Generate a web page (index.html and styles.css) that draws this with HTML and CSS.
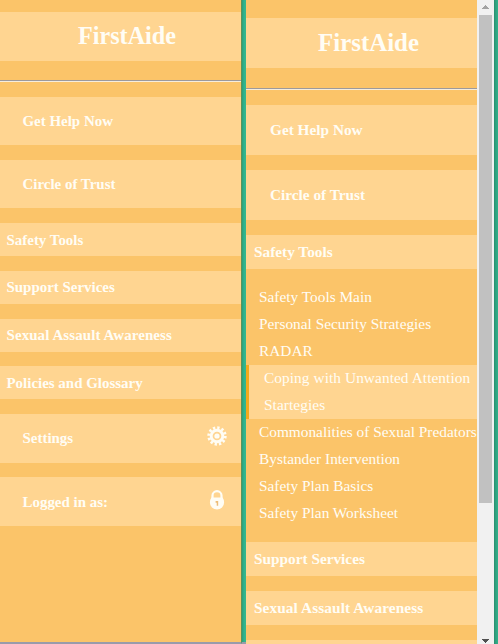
FILE: index.html
```html
<!DOCTYPE html>
<html lang="en">
<head>
<meta charset="utf-8">
<title>FirstAide</title>
<link rel="stylesheet" href="styles.css">
</head>
<body>
<div class="screens">
  <nav class="menu compact">
    <h1 class="brand">FirstAide</h1>
    <hr class="rule">
    <div class="item">Get Help Now</div>
    <div class="item">Circle of Trust</div>
    <div class="group">Safety Tools</div>
    <div class="group">Support Services</div>
    <div class="group wide">Sexual Assault Awareness</div>
    <div class="group">Policies and Glossary</div>
    <div class="item">Settings
      <svg class="icon" viewBox="0 0 20 20">
        <g fill="none" stroke="#fffdf5">
          <circle cx="10" cy="10" r="5.8" stroke-width="2.9"/>
          <circle cx="10" cy="10" r="8.2" stroke-width="3" stroke-dasharray="2.3 1.993"/>
        </g>
        <circle cx="10" cy="10" r="2.6" fill="#fffdf5"/>
      </svg>
    </div>
    <div class="item">Logged in as:
      <svg class="icon" viewBox="0 0 20 20">
        <path d="M5.5 10V5.5a4.5 4.3 0 0 1 9 0V10" fill="none" stroke="#fffdf5" stroke-width="2.2"/>
        <path d="M4.4 7.6h11.2q1.5 2.2 1.5 4.8a7.1 7.1 0 0 1-14.2 0q0-2.6 1.5-4.8z" fill="#fffdf5"/>
        <path d="M8.6 11h2.6v4.8H9.7v-3H8.6z" fill="#edbd78"/>
      </svg>
    </div>
  </nav>
  <div class="divider"></div>
  <nav class="menu expanded">
    <h1 class="brand">FirstAide</h1>
    <hr class="rule">
    <div class="item">Get Help Now</div>
    <div class="item">Circle of Trust</div>
    <div class="group">Safety Tools</div>
    <ul class="links">
      <li>Safety Tools Main</li>
      <li>Personal Security Strategies</li>
      <li>RADAR</li>
      <li class="active">Coping with Unwanted Attention<br>Startegies</li>
      <li>Commonalities of Sexual Predators</li>
      <li>Bystander Intervention</li>
      <li>Safety Plan Basics</li>
      <li>Safety Plan Worksheet</li>
    </ul>
    <div class="group">Support Services</div>
    <div class="group wide">Sexual Assault Awareness</div>
    <div class="group"></div>
  </nav>
  <div class="scrollbar">
    <svg class="arrow" viewBox="0 0 17 15"><path d="M5 9h7v-1h-1v-1h-1v-1h-1v-1h-1v1h-1v1h-1v1h-1z" fill="#a3a3a3"/></svg>
    <div class="thumb"></div>
    <svg class="arrow bottom" viewBox="0 0 17 15"><path d="M5 8h7v1h-1v1h-1v1h-1v1h-1v-1h-1v-1h-1v-1h-1z" fill="#505050"/></svg>
  </div>
  <div class="edge"></div>
</div>
</body>
</html>
```
FILE: styles.css
```css
* { box-sizing: border-box; }
body {
  margin: 0;
  overflow: hidden;
  background: #fbc469;
  color: #fffdf5;
  font-family: "Liberation Serif", "Times New Roman", serif;
}
.screens { display: flex; height: 644px; }
.menu { overflow: hidden; background: #fbc469; font-weight: bold; }
.brand, .item, .group { display: flex; align-items: center; background: #ffd591; white-space: nowrap; }
.brand { margin: 0; justify-content: center; }
.rule { height: 2px; margin: 0; border: 0; border-top: 1px solid #9d9a9c; background: #f7eddc; }
.item { justify-content: space-between; }

.compact { width: 241px; padding-top: 12px; border-bottom: 2px solid #999baa; font-size: 14.95px; }
.compact .brand { height: 48.5px; margin-bottom: 19.5px; padding-left: 13px; font-size: 24.2px; }
.compact .rule { margin-bottom: 14.5px; }
.compact .item { height: 48.6px; margin-bottom: 14.8px; padding: 1px 14px 0 22.5px; }
.compact .group { height: 33px; margin-bottom: 14.7px; padding: 1px 0 0 6.5px; }
.menu .wide { letter-spacing: 0.1px; }
.icon { flex: none; width: 20px; height: 20px; margin-top: -5px; }

.divider { width: 5px; border-left: 1px solid #56945e; background: linear-gradient(90deg, #319c76, #2db58e 50%, #38b58c); border-bottom: 2px solid #999baa; }

.expanded { width: 231px; padding-top: 18px; font-size: 15.3px; }
.expanded .brand { height: 50px; margin-bottom: 20px; padding-left: 14px; font-size: 24.9px; }
.expanded .rule { margin-bottom: 15px; }
.expanded .item { height: 50px; margin-bottom: 15px; padding-left: 24px; }
.expanded .group { height: 34px; margin-bottom: 15px; padding-left: 8px; }
.links { margin: 0 0 15px; padding: 0; list-style: none; font-size: 15.35px; font-weight: normal; line-height: 27px; white-space: nowrap; }
.links li { height: 27px; padding-left: 13px; line-height: 25px; }
.links .active { height: 54px; padding-left: 15px; border-left: 3px solid #f3a91b; background: #ffd591; line-height: 27px; letter-spacing: 0.07px; }
.links .active { padding-top: 0; line-height: 26.6px; }

.scrollbar { display: flex; flex-direction: column; width: 17px; background: #f1f1f1; }
.arrow { width: 17px; height: 15px; }
.thumb { width: 13px; height: 488px; margin-left: 2px; background: #c1c1c1; }
.bottom { margin-top: auto; margin-bottom: -2px; }
.edge { width: 4px; background: linear-gradient(90deg, #2b8c6e, #30a581 50%, #2fb18b); }
```
